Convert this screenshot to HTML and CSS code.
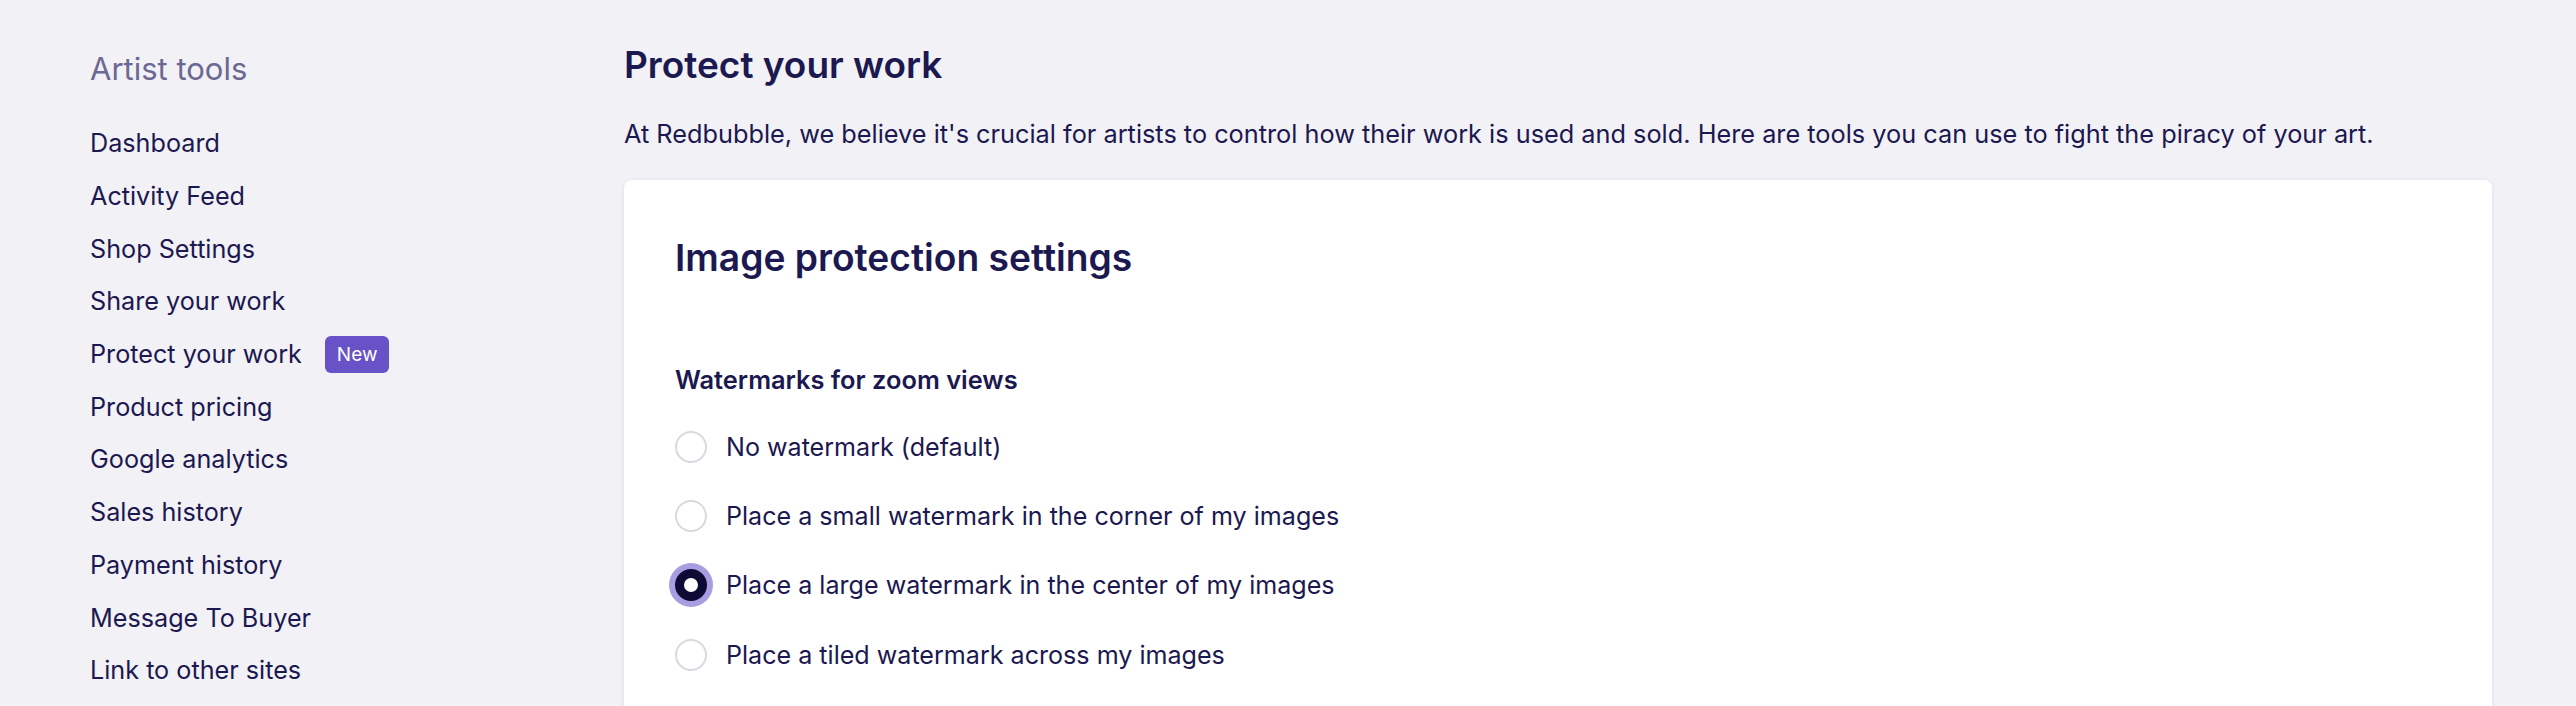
FILE: index.html
```html
<!DOCTYPE html>
<html lang="en">
<head>
    <meta charset="UTF-8">
    <meta name="viewport" content="width=device-width, initial-scale=1.0">
    <title>Protect your work</title>
    <link rel="stylesheet" href="styles.css">
</head>
<body>
    <div class="page">
        <aside class="sidebar">
            <h3 class="sidebar-title">Artist tools</h3>
            <ul class="nav">
                <li><a href="#">Dashboard</a></li>
                <li><a href="#">Activity Feed</a></li>
                <li><a href="#">Shop Settings</a></li>
                <li><a href="#">Share your work</a></li>
                <li><a href="#">Protect your work</a><span class="badge">New</span></li>
                <li><a href="#">Product pricing</a></li>
                <li><a href="#">Google analytics</a></li>
                <li><a href="#">Sales history</a></li>
                <li><a href="#">Payment history</a></li>
                <li><a href="#">Message To Buyer</a></li>
                <li><a href="#">Link to other sites</a></li>
            </ul>
        </aside>

        <main class="main">
            <h1 class="page-title">Protect your work</h1>
            <p class="intro">At Redbubble, we believe it's crucial for artists to control how their work is used and sold. Here are tools you can use to fight the piracy of your art.</p>

            <div class="card">
                <h2 class="card-title">Image protection settings</h2>

                <div class="field">
                    <div class="field-label">Watermarks for zoom views</div>
                    <label class="option">
                        <input type="radio" name="watermark" value="none">
                        <span>No watermark (default)</span>
                    </label>
                    <label class="option">
                        <input type="radio" name="watermark" value="small">
                        <span>Place a small watermark in the corner of my images</span>
                    </label>
                    <label class="option">
                        <input type="radio" name="watermark" value="large" checked>
                        <span>Place a large watermark in the center of my images</span>
                    </label>
                    <label class="option">
                        <input type="radio" name="watermark" value="tiled">
                        <span>Place a tiled watermark across my images</span>
                    </label>
                </div>
            </div>
        </main>
    </div>
</body>
</html>
```

FILE: styles.css
```css
body {
    font-family: Inter, "Noto Sans", sans-serif;
    background-color: #f1f1f6;
    color: #1c1850;
    margin: 0;
    padding: 0;
}
.page {
    display: flex;
    gap: 64px;
    padding: 43px 84px 0 90px;
}
.sidebar {
    width: 470px;
    flex-shrink: 0;
}
.sidebar-title {
    margin: 6px 0 28px;
    font-size: 31px;
    line-height: 40px;
    font-weight: 400;
    color: #6c6893;
}
.nav {
    list-style: none;
    margin: 0;
    padding: 0;
}
.nav li {
    display: flex;
    align-items: center;
    height: 52.7px;
    font-size: 25.2px;
}
.nav a {
    color: #1c1850;
    text-decoration: none;
}
.badge {
    margin-left: 23px;
    padding: 0 12px;
    height: 37px;
    line-height: 37px;
    font-size: 19px;
    color: #fff;
    background-color: #6752c8;
    border-radius: 6px;
}
.main {
    flex: 1;
}
.page-title {
    margin: 0 0 27px;
    font-size: 37px;
    line-height: 44px;
    font-weight: 600;
}
.intro {
    margin: 0 0 26px;
    font-size: 25.3px;
    line-height: 40px;
}
.card {
    background-color: #fff;
    border-radius: 8px;
    box-shadow: 0 1px 4px rgba(30, 25, 80, 0.1);
    padding: 56px 52px 60px 51px;
}
.card-title {
    margin: 0 0 84px;
    font-size: 37.2px;
    line-height: 44px;
    font-weight: 600;
}
.field-label {
    font-size: 25.4px;
    line-height: 32px;
    font-weight: 600;
    margin-bottom: 16px;
}
.option {
    display: flex;
    align-items: center;
    gap: 19px;
    height: 69.3px;
    font-size: 25.1px;
    cursor: pointer;
}
.option input {
    appearance: none;
    margin: 0;
    width: 32px;
    height: 32px;
    border: 2px solid #d6d9df;
    border-radius: 50%;
    background-color: #fff;
}
.option input:checked {
    border: 9px solid #0e0a36;
    box-shadow: 0 0 0 6px #a99de1;
}
```
